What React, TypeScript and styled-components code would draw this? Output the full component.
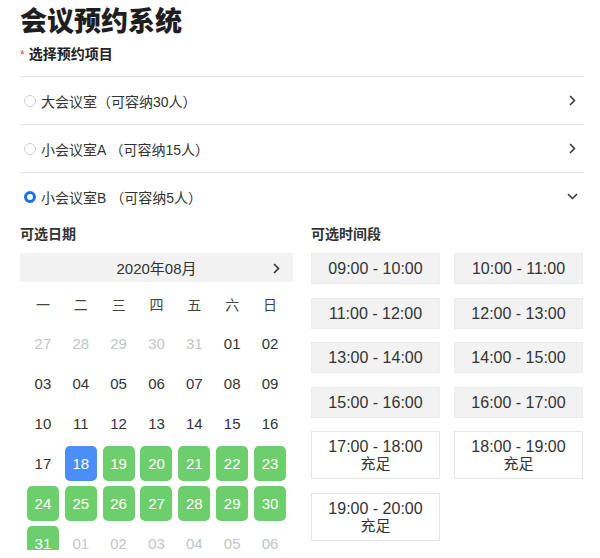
import React from "react";
import styled, { createGlobalStyle } from "styled-components";

const GlobalStyle = createGlobalStyle`
  body {
    margin: 0;
    background: #ffffff;
    font-family: "Liberation Sans", "Noto Sans CJK SC", sans-serif;
    color: #333333;
  }
`;

const Page = styled.div`
  height: 550px;
  overflow: hidden;
  padding: 0 16px 0 20px;
`;

const Title = styled.h1`
  margin: 0;
  font-family: "Noto Sans CJK SC", sans-serif;
  font-size: 27px;
  line-height: 40px;
  font-weight: 900;
  color: #1e1e1e;
`;

const FieldLabel = styled.div`
  display: flex;
  align-items: center;
  height: 26px;
  font-size: 14px;
  font-weight: 700;
  color: #222222;
`;

const Star = styled.span`
  color: #f0443c;
  font-size: 12px;
  margin-right: 4px;
  margin-top: 3px;
  font-weight: 400;
`;

const RoomList = styled.div`
  margin-top: 10px;
`;

const RoomRow = styled.div`
  display: flex;
  align-items: center;
  height: 47px;
  border-top: 1px solid #e3e3e3;
  padding-left: 4px;
  font-size: 14px;
  color: #333333;
`;

const Radio = styled.span<{ $checked?: boolean }>`
  box-sizing: border-box;
  width: 12px;
  height: 12px;
  border-radius: 50%;
  margin-right: 5px;
  border: ${(p) => (p.$checked ? "3.5px solid #1d6ff2" : "1px solid #cfcfcf")};
  background: #ffffff;
`;

const RoomName = styled.span`
  flex: 1;
`;

const Chevron = styled.svg<{ $down?: boolean }>`
  margin-right: ${(p) => (p.$down ? "6px" : "8px")};
  flex: none;
`;

const Columns = styled.div`
  display: grid;
  grid-template-columns: 273px 273px;
  column-gap: 18px;
  margin-top: 4px;
`;

const SectionTitle = styled.div`
  font-size: 14px;
  font-weight: 700;
  line-height: 20px;
  color: #333333;
  margin-bottom: 9px;
`;

const MonthBar = styled.div`
  position: relative;
  display: flex;
  align-items: center;
  justify-content: center;
  height: 29px;
  background: #f2f2f2;
  font-size: 15px;
  color: #333333;
`;

const NextMonth = styled.svg`
  position: absolute;
  right: 13px;
  top: 10px;
`;

const DayGrid = styled.div`
  display: grid;
  grid-template-columns: repeat(7, 1fr);
  grid-auto-rows: 35px;
  row-gap: 5px;
  padding: 4px 4px 0;
`;

const WeekDay = styled.div`
  display: flex;
  align-items: center;
  justify-content: center;
  font-size: 14px;
  color: #444444;
`;

type Tone = "muted" | "normal" | "free" | "today";

const Day = styled.div<{ $tone: Tone }>`
  justify-self: center;
  width: 32px;
  display: flex;
  align-items: center;
  justify-content: center;
  border-radius: 5px;
  font-size: 15px;
  color: ${(p) =>
    p.$tone === "muted" ? "#c4c4c4" : p.$tone === "normal" ? "#333333" : "#ffffff"};
  background: ${(p) =>
    p.$tone === "free" ? "#6dcf6b" : p.$tone === "today" ? "#4b8ef7" : "transparent"};
`;

const SlotGrid = styled.div`
  display: grid;
  grid-template-columns: 129px 129px;
  column-gap: 14px;
  row-gap: 13.5px;
  align-items: start;
`;

const Slot = styled.div<{ $full?: boolean }>`
  box-sizing: border-box;
  padding: 6px 0;
  line-height: 17px;
  text-align: center;
  font-size: 16px;
  color: #333333;
  border: 1px solid ${(p) => (p.$full ? "#e6e6e6" : "#ececec")};
  background: ${(p) => (p.$full ? "#ffffff" : "#f2f2f2")};
`;

const SlotNote = styled.div`
  font-size: 15px;
`;

const rooms = [
  { name: "大会议室（可容纳30人）", checked: false },
  { name: "小会议室A （可容纳15人）", checked: false },
  { name: "小会议室B （可容纳5人）", checked: true },
];

const weekDays = ["一", "二", "三", "四", "五", "六", "日"];

const buildDays = () => {
  const days: { label: string; tone: Tone }[] = [];
  [27, 28, 29, 30, 31].forEach((d) => days.push({ label: String(d), tone: "muted" }));
  for (let d = 1; d <= 31; d++) {
    const label = d < 10 ? `0${d}` : String(d);
    let tone: Tone = "normal";
    if (d === 18) tone = "today";
    else if (d > 18) tone = "free";
    days.push({ label, tone });
  }
  for (let d = 1; d <= 6; d++) days.push({ label: `0${d}`, tone: "muted" });
  return days;
};

const slots = [
  { time: "09:00 - 10:00", full: false },
  { time: "10:00 - 11:00", full: false },
  { time: "11:00 - 12:00", full: false },
  { time: "12:00 - 13:00", full: false },
  { time: "13:00 - 14:00", full: false },
  { time: "14:00 - 15:00", full: false },
  { time: "15:00 - 16:00", full: false },
  { time: "16:00 - 17:00", full: false },
  { time: "17:00 - 18:00", full: true },
  { time: "18:00 - 19:00", full: true },
  { time: "19:00 - 20:00", full: true },
];

const App = () => {
  const days = buildDays();
  return (
    <Page>
      <GlobalStyle />
      <Title>会议预约系统</Title>
      <FieldLabel>
        <Star>*</Star>选择预约项目
      </FieldLabel>
      <RoomList>
        {rooms.map((r) => (
          <RoomRow key={r.name}>
            <Radio $checked={r.checked} />
            <RoomName>{r.name}</RoomName>
            {r.checked ? (
              <Chevron $down width="11" height="7" viewBox="0 0 11 7">
                <path d="M1 1 L5.5 5.5 L10 1" fill="none" stroke="#333" strokeWidth="1.5" />
              </Chevron>
            ) : (
              <Chevron width="7" height="11" viewBox="0 0 7 11">
                <path d="M1 1 L5.5 5.5 L1 10" fill="none" stroke="#333" strokeWidth="1.5" />
              </Chevron>
            )}
          </RoomRow>
        ))}
      </RoomList>
      <Columns>
        <div>
          <SectionTitle>可选日期</SectionTitle>
          <MonthBar>
            2020年08月
            <NextMonth width="7" height="11" viewBox="0 0 7 11">
              <path d="M1 1 L5.5 5.5 L1 10" fill="none" stroke="#333" strokeWidth="1.6" />
            </NextMonth>
          </MonthBar>
          <DayGrid>
            {weekDays.map((w) => (
              <WeekDay key={w}>{w}</WeekDay>
            ))}
            {days.map((d, i) => (
              <Day key={i} $tone={d.tone}>
                {d.label}
              </Day>
            ))}
          </DayGrid>
        </div>
        <div>
          <SectionTitle>可选时间段</SectionTitle>
          <SlotGrid>
            {slots.map((s) => (
              <Slot key={s.time} $full={s.full}>
                {s.time}
                {s.full && <SlotNote>充足</SlotNote>}
              </Slot>
            ))}
          </SlotGrid>
        </div>
      </Columns>
    </Page>
  );
};

export default App;
